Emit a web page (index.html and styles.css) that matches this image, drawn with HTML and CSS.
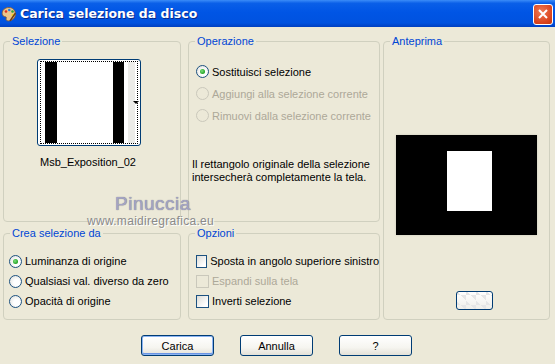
FILE: index.html
```html
<!DOCTYPE html>
<html lang="it">
<head>
    <meta charset="UTF-8">
    <title>Carica selezione da disco</title>
    <link rel="stylesheet" href="styles.css">
</head>
<body>
    <div class="window">
        <header class="titlebar">
            <svg class="app-icon" width="16" height="16" viewBox="0 0 16 16">
                <path d="M8 1.5c-4 0-6.8 2.6-6.8 5.8 0 2.4 1.6 3.4 3 3.4 1.2 0 1.4 1 1 1.9-.5 1.2.4 2.3 2 2.3 4.2 0 7.2-3.1 7.2-7 0-3.7-2.8-6.4-6.4-6.4z" fill="#e9c58c" stroke="#8a5a2b" stroke-width="0.8"/>
                <circle cx="5" cy="5.5" r="1.3" fill="#e0301e"/>
                <circle cx="8.3" cy="4" r="1.3" fill="#2a7de1"/>
                <circle cx="11.5" cy="5.5" r="1.3" fill="#2fa23a"/>
                <circle cx="11.8" cy="9" r="1.3" fill="#f2d21b"/>
                <path d="M9 15l5.5-8" stroke="#6b3b16" stroke-width="1.4"/>
            </svg>
            <span class="title">Carica selezione da disco</span>
            <span class="close-btn">
                <svg width="12" height="12" viewBox="0 0 12 12"><path d="M2 2l8 8M10 2l-8 8" stroke="#fff" stroke-width="2"/></svg>
            </span>
        </header>

        <div class="client">
            <div class="panels">
                <fieldset class="group col-left">
                    <legend>Selezione</legend>
                    <div class="thumb">
                        <div class="thumb-focus">
                            <span class="bar black wide"></span>
                            <span class="bar white"></span>
                            <span class="bar black"></span>
                            <span class="bar white-gap"></span>
                            <span class="bar gray"></span>
                        </div>
                        <span class="drop-arrow"></span>
                    </div>
                    <p class="thumb-label">Msb_Exposition_02</p>
                </fieldset>

                <fieldset class="group col-mid">
                    <legend>Operazione</legend>
                    <div class="option-list spaced">
                        <label class="option"><span class="radio checked"></span>Sostituisci selezione</label>
                        <label class="option disabled"><span class="radio"></span>Aggiungi alla selezione corrente</label>
                        <label class="option disabled"><span class="radio"></span>Rimuovi dalla selezione corrente</label>
                    </div>
                    <p class="note">Il rettangolo originale della selezione intersecherà completamente la tela.</p>
                </fieldset>

                <fieldset class="group preview-group">
                    <legend>Anteprima</legend>
                    <div class="preview">
                        <div class="preview-sel"></div>
                    </div>
                    <span class="bg-btn"></span>
                </fieldset>

                <fieldset class="group col-left">
                    <legend>Crea selezione da</legend>
                    <div class="option-list left">
                        <label class="option"><span class="radio checked"></span>Luminanza di origine</label>
                        <label class="option"><span class="radio"></span>Qualsiasi val. diverso da zero</label>
                        <label class="option"><span class="radio"></span>Opacità di origine</label>
                    </div>
                </fieldset>

                <fieldset class="group col-mid">
                    <legend>Opzioni</legend>
                    <div class="option-list">
                        <label class="option"><span class="check"></span>Sposta in angolo superiore sinistro</label>
                        <label class="option disabled"><span class="check"></span>Espandi sulla tela</label>
                        <label class="option"><span class="check"></span>Inverti selezione</label>
                    </div>
                </fieldset>
            </div>

            <div class="actions">
                <button class="btn default">Carica</button>
                <button class="btn">Annulla</button>
                <button class="btn">?</button>
            </div>

            <div class="watermark">
                <span class="wm-name">Pinuccia</span>
                <span class="wm-url">www.maidiregrafica.eu</span>
            </div>
        </div>
    </div>
</body>
</html>
```

FILE: styles.css
```css
:root {
    --face: #ece9d8;
    --group-line: #d0d0bf;
    --legend: #0046d5;
    --xp-border: #003c74;
    --disabled: #aca899;
}

body, p { margin: 0; }
body {
    font-family: "Liberation Sans", Arial, sans-serif;
    font-size: 11px;
    color: #000;
    background: var(--face);
}

.window { width: 555px; height: 364px; overflow: hidden; }

/* title bar */
.titlebar {
    height: 27px;
    display: flex;
    align-items: center;
    background: linear-gradient(to bottom, #3b8cf8 0%, #0a5fe8 12%, #0055e5 45%, #0052df 85%, #003fc0 100%);
    color: #fff;
}

.app-icon { margin: 0 3px 0 1px; }

.title {
    font-family: "DejaVu Sans", sans-serif;
    font-weight: bold;
    font-size: 12.5px;
    text-shadow: 1px 1px #0a2a8a;
    flex: 1;
}

.close-btn {
    width: 18px;
    height: 19px;
    margin-right: 2px;
    margin-top: 1px;
    border: 1px solid #fff;
    border-radius: 3px;
    background: radial-gradient(circle at 40% 35%, #f07a55, #d9421b 70%, #c0360f);
    display: flex;
    align-items: center;
    justify-content: center;
}

/* client area */
.client { position: relative; padding: 8px 0 0 3px; }

.panels {
    display: grid;
    grid-template-columns: 185px 195px 167px;
    grid-template-rows: 187px 93px;
    row-gap: 5px;
}

.group {
    margin: 0;
    padding: 0;
    min-width: 0;
    border: 1px solid var(--group-line);
    border-radius: 4px;
}

.group legend {
    margin-left: 6px;
    padding: 0 2px;
    color: var(--legend);
    line-height: 13px;
}

.col-left { margin-right: 7px; }
.col-mid { margin-right: 3px; }
.preview-group { grid-column: 3; grid-row: 1 / span 2; }

/* selection thumbnail */
.thumb {
    position: relative;
    width: 98px;
    height: 83px;
    margin: 11px 0 0 33px;
    padding: 1px 2px;
    border: 1px solid var(--xp-border);
    border-radius: 3px;
    background: #fff;
}

.thumb-focus {
    height: 100%;
    box-sizing: border-box;
    border: 1px dotted #000;
    padding-left: 4px;
    display: flex;
}

.bar { display: block; height: 100%; }
.bar.black { width: 11px; background: #000; }
.bar.black.wide { width: 12px; }
.bar.white { width: 56px; background: #fff; }
.bar.white-gap { width: 4px; }
.bar.gray { width: 7px; background: #ecece9; }

.drop-arrow {
    position: absolute;
    left: 95px;
    top: 41px;
    border-left: 3px solid transparent;
    border-right: 3px solid transparent;
    border-top: 3px solid #000;
}

.thumb-label { text-align: center; margin: 10px 8px 0 0; line-height: 13px; }

/* radio and check rows */
.option-list { display: flex; flex-direction: column; padding: 11px 0 0 7px; }
.option-list.spaced { padding-top: 13px; gap: 1px; }
.option-list.spaced .option { height: 21px; }
.option-list.left { padding-left: 5px; }

.option {
    display: flex;
    align-items: center;
    height: 20px;
    gap: 3px;
    white-space: nowrap;
}

.option.disabled { color: var(--disabled); }

.radio {
    width: 11px;
    height: 11px;
    border: 1px solid #1c5180;
    border-radius: 50%;
    background: radial-gradient(circle at 60% 60%, #fff 30%, #dcdcd7 100%);
    display: flex;
    align-items: center;
    justify-content: center;
}

.radio.checked::after {
    content: "";
    width: 5px;
    height: 5px;
    border-radius: 50%;
    background: radial-gradient(circle at 40% 40%, #7ee07e, #21a121 70%);
}

.check {
    width: 11px;
    height: 11px;
    border: 1px solid #1c5180;
    background: linear-gradient(135deg, #dcdcd7, #fff 80%);
}

.disabled .radio, .disabled .check { border-color: #cac8bb; background: var(--face); }

.note { padding: 32px 0 0 3px; line-height: 13px; width: 180px; }

/* preview */
.preview {
    width: 141px;
    height: 100px;
    margin: 87px auto 0;
    background: #000;
    box-shadow: 0 0 2px #c8c6b8;
    padding: 16px 0 0 51px;
    box-sizing: border-box;
}

.preview-sel { width: 45px; height: 60px; background: #fff; }

.bg-btn {
    display: block;
    width: 35px;
    height: 17px;
    margin: 56px 0 0 72px;
    border: 1px solid var(--xp-border);
    border-radius: 3px;
    background:
        linear-gradient(45deg, #e6e6e6 25%, transparent 25%, transparent 75%, #e6e6e6 75%) 9px 3px / 10px 10px,
        linear-gradient(to bottom, #fff, #f0efe9);
}

/* bottom buttons */
.actions { display: flex; gap: 26px; padding: 15px 0 0 138px; }

.btn {
    width: 73px;
    height: 21px;
    padding: 0;
    font: inherit;
    color: #000;
    border: 1px solid var(--xp-border);
    border-radius: 3px;
    background: linear-gradient(to bottom, #fff 0%, #f6f5f0 60%, #e3e1d8 100%);
}

.btn.default { box-shadow: inset 0 0 0 1px #8cb4f2, inset 0 -1px 0 1px #6a94e4; }

/* watermark over the dialog */
.watermark {
    position: absolute;
    left: 87px;
    top: 166px;
    display: flex;
    flex-direction: column;
    align-items: flex-start;
    pointer-events: none;
}

.wm-name {
    margin-left: 28px;
    font-size: 19px;
    letter-spacing: 0.5px;
    color: #a4a4c4;
    text-shadow: 0 0 1px #6a6a7a;
    line-height: 22px;
}

.wm-url {
    font-size: 12px;
    letter-spacing: 0.3px;
    color: #8a8a8a;
    text-shadow: 1px 1px #fff;
    line-height: 12px;
}
```
